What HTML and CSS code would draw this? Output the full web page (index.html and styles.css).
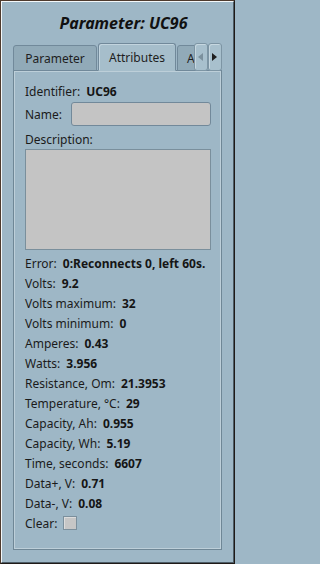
FILE: index.html
```html
<!DOCTYPE html>
<html>
<head>
<meta charset="utf-8">
<link rel="stylesheet" href="styles.css">
</head>
<body>
<div class="window">
  <div class="frame">
    <div class="title">Parameter: UC96</div>
    <div class="tabbar">
      <div class="tab">Parameter</div>
      <div class="tab active">Attributes</div>
      <div class="tab">Actions</div>
      <div class="scroll">
        <div class="sbtn"><svg width="6" height="8" viewBox="0 0 6 8"><path d="M5 0 L0 4 L5 8 Z" fill="#7b909d"/></svg></div>
        <div class="sbtn"><svg width="6" height="8" viewBox="0 0 6 8"><path d="M0 0 L5 4 L0 8 Z" fill="#1e1e1e"/></svg></div>
      </div>
    </div>
    <div class="pane">
      <div class="row"><span>Identifier:</span><b>UC96</b></div>
      <div class="row name"><span>Name:</span><div class="input"></div></div>
      <div class="row desc"><span>Description:</span></div>
      <div class="textarea"></div>
      <div class="row err"><span>Error:</span><b>0:Reconnects 0, left 60s.</b></div>
      <div class="row"><span>Volts:</span><b>9.2</b></div>
      <div class="row"><span>Volts maximum:</span><b>32</b></div>
      <div class="row"><span>Volts minimum:</span><b>0</b></div>
      <div class="row"><span>Amperes:</span><b>0.43</b></div>
      <div class="row"><span>Watts:</span><b>3.956</b></div>
      <div class="row"><span>Resistance, Om:</span><b>21.3953</b></div>
      <div class="row"><span>Temperature, °C:</span><b>29</b></div>
      <div class="row"><span>Capacity, Ah:</span><b>0.955</b></div>
      <div class="row"><span>Capacity, Wh:</span><b>5.19</b></div>
      <div class="row"><span>Time, seconds:</span><b>6607</b></div>
      <div class="row"><span>Data+, V:</span><b>0.71</b></div>
      <div class="row"><span>Data-, V:</span><b>0.08</b></div>
      <div class="row"><span>Clear:</span><div class="check"></div></div>
    </div>
  </div>
</div>
</body>
</html>
```
FILE: styles.css
```css
html, body {
  margin: 0;
  padding: 0;
  background: #9eb7c6;
}
.window {
  width: 235px;
  height: 564px;
  box-sizing: border-box;
  border: 1px solid #4e3a2d;
  border-right-color: #1f1a17;
  border-bottom-color: #1f1a17;
  background: #9eb7c6;
  font-family: "Noto Sans", "Open Sans", sans-serif;
  font-size: 12px;
  color: #1b1b1b;
}
.frame {
  height: 100%;
  box-sizing: border-box;
  border-top: 1px solid #f4f8fa;
  border-left: 1px solid #f4f8fa;
  border-right: 1px solid #4d5c66;
  border-bottom: 1px solid #4d5c66;
  padding: 0 11px 0 11px;
  display: flex;
  flex-direction: column;
}
.title {
  height: 41px;
  box-sizing: border-box;
  padding-top: 11px;
  padding-left: 12px;
  line-height: 20px;
  text-align: center;
  font-size: 16px;
  font-weight: bold;
  font-style: italic;
  color: #111;
}
.tabbar {
  position: relative;
  height: 27px;
  display: flex;
  align-items: flex-end;
  overflow: hidden;
  z-index: 1;
  margin-bottom: -1px;
  height: 28px;
}
.tab {
  box-sizing: border-box;
  height: 26px;
  padding-top: 4px;
  line-height: 17px;
  text-align: center;
  border: 1px solid #71899a;
  border-bottom: 1px solid #71899a;
  border-radius: 3px 3px 0 0;
  background: #91aab8;
  flex: none;
  width: 84px;
  color: #1e1e1e;
}
.tab.active {
  height: 28px;
  width: 78px;
  margin-left: 1px;
  padding-top: 5px;
  background: #a6becb;
  border-bottom: 1px solid #a6becb;
  box-shadow: inset 1px 1px 0 #c2d4de;
}
.tab.active + .tab {
  margin-left: 1px;
  width: 70px;
  padding-left: 9px;
  text-align: left;
}
.scroll {
  position: absolute;
  right: 0;
  top: 0;
  display: flex;
  gap: 0;
}
.sbtn {
  box-sizing: border-box;
  width: 14px;
  height: 28px;
  border: 1px solid #7d95a4;
  border-radius: 3px;
  background: #a8c0cd;
  box-shadow: inset 1px 1px 0 #c6d7e0;
  display: flex;
  align-items: center;
  justify-content: center;
}
.pane {
  height: 480px;
  box-sizing: border-box;
  border: 1px solid #6f8796;
  box-shadow: inset 0 0 0 1px #bdcfd9;
  background: #9eb7c6;
  padding: 10px 10px 0 11px;
  display: flex;
  flex-direction: column;
}
.row {
  height: 20px;
  display: flex;
  align-items: center;
  gap: 6px;
  white-space: nowrap;
}
.row b {
  font-weight: bold;
  color: #151515;
}
.row.name {
  height: 24px;
  margin-top: 1px;
  gap: 9px;
}
.input {
  flex: 1;
  height: 24px;
  box-sizing: border-box;
  background: #c4c4c4;
  border: 1px solid #72899a;
  border-radius: 3px;
}
.row.desc {
  margin-top: 3px;
}
.textarea {
  height: 101px;
  box-sizing: border-box;
  background: #c4c4c4;
  border: 1px solid #7a8f9c;
}
.row.err {
  margin-top: 3px;
}
.check {
  width: 14px;
  height: 14px;
  box-sizing: border-box;
  background: #c6c6c6;
  border: 1px solid #7b8f9c;
  box-shadow: inset 1px 1px 0 #dcdcdc;
}
```
